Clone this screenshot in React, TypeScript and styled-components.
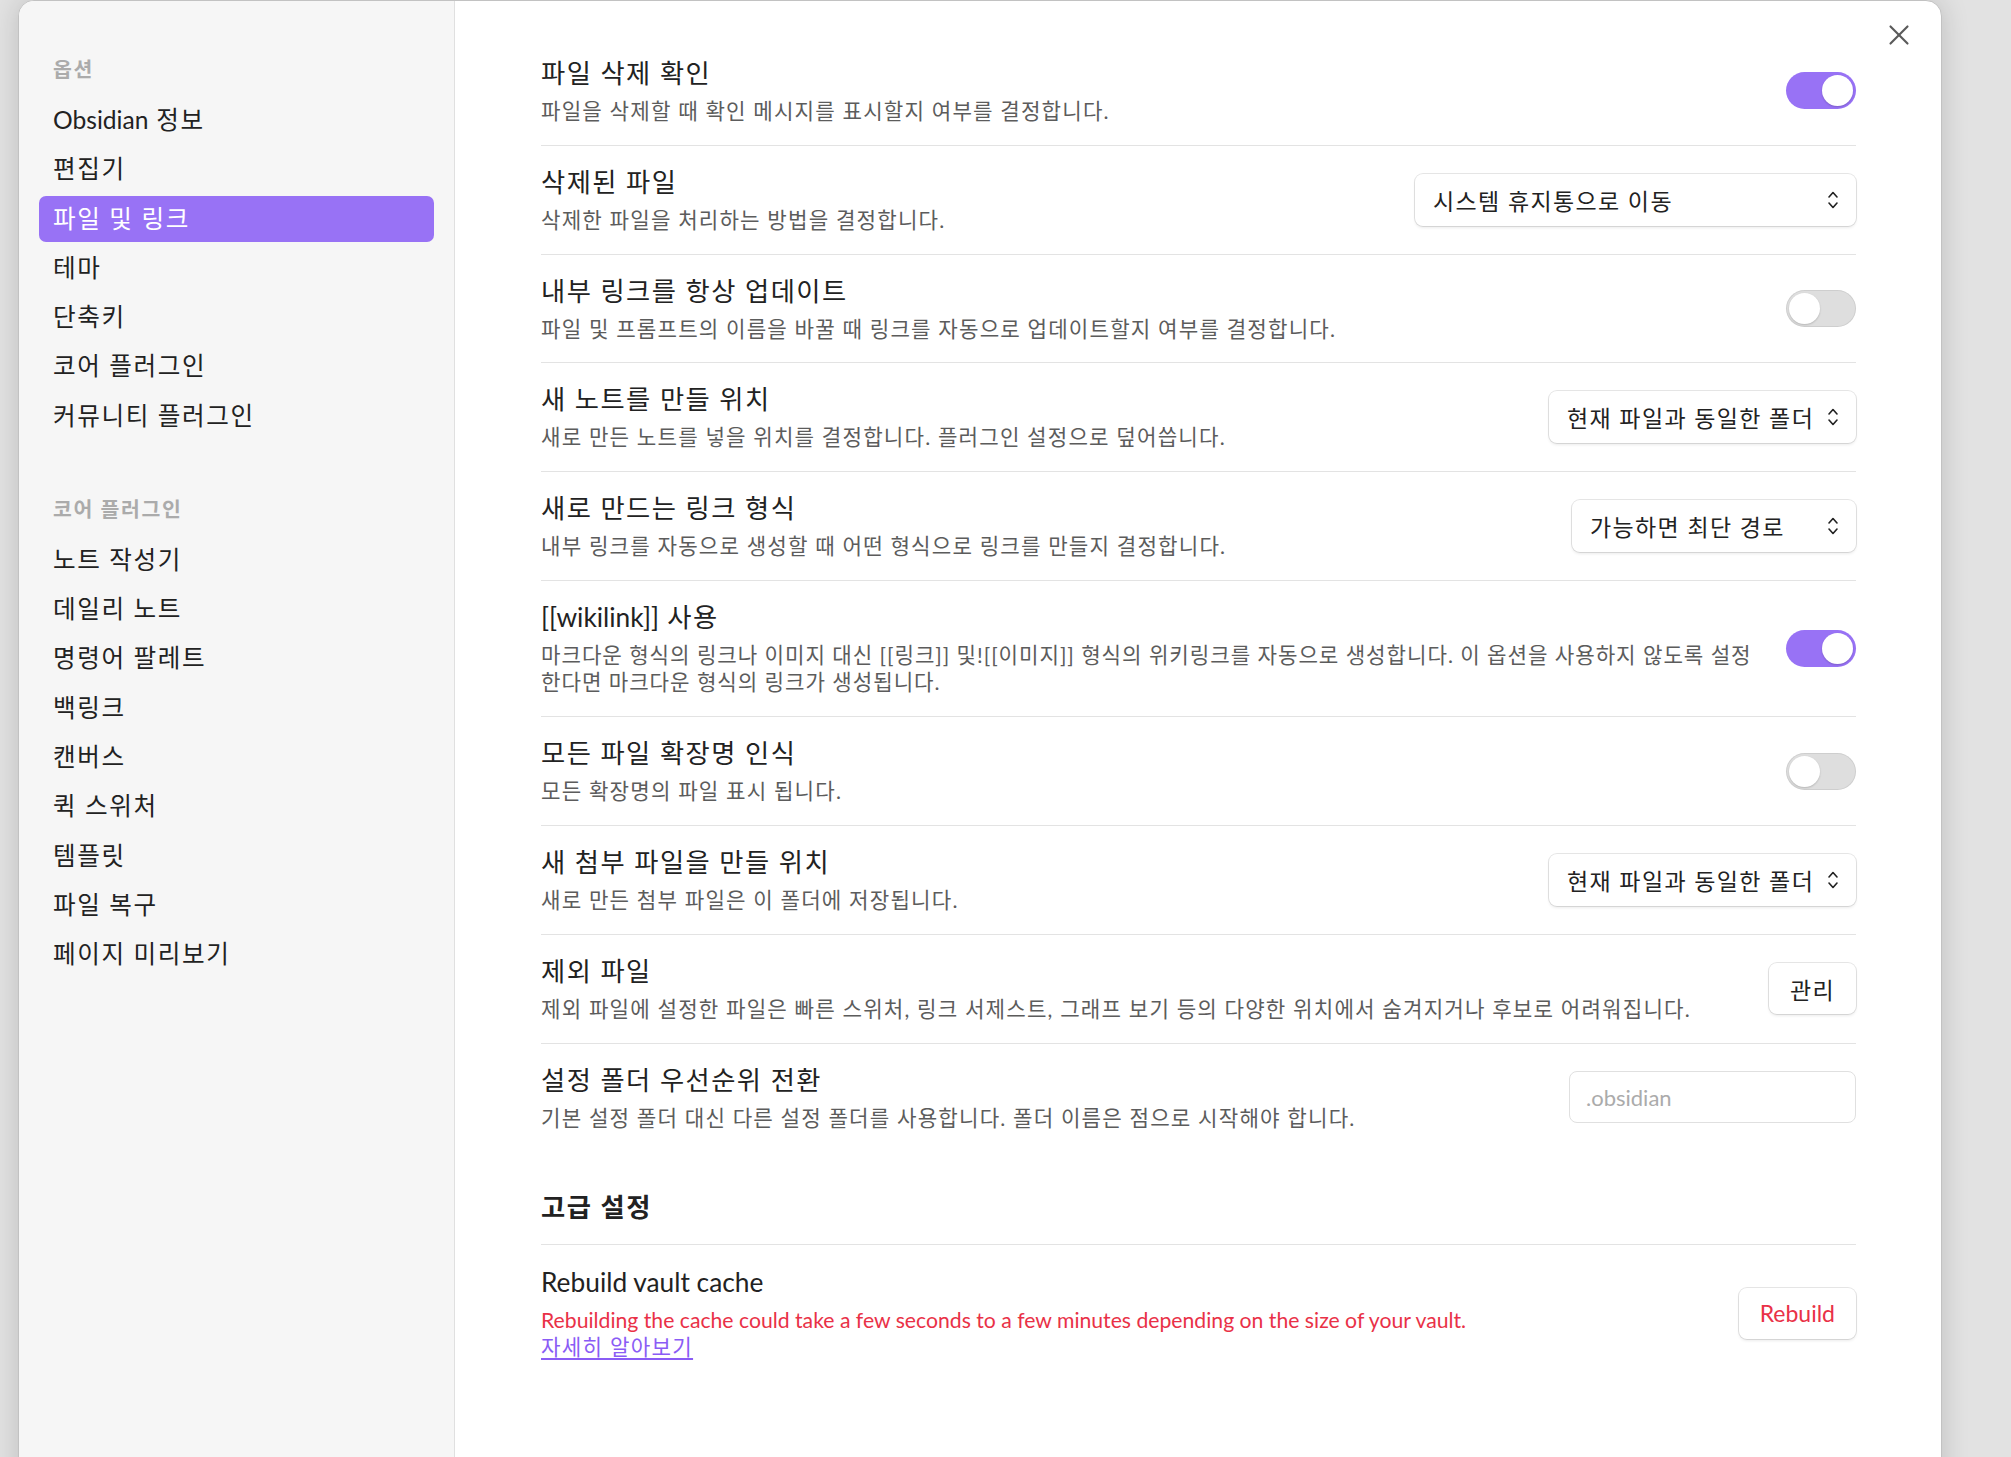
import React from "react";
import styled, { createGlobalStyle } from "styled-components";

const GlobalStyle = createGlobalStyle`
  html, body {
    margin: 0;
    padding: 0;
    background: #e2e2e2;
    overflow: hidden;
  }
  body {
    font-family: Lato, "Noto Sans CJK KR", sans-serif;
    color: #222222;
  }
  * { box-sizing: border-box; }
`;

const Page = styled.div`
  width: 2011px;
  height: 1457px;
  padding-left: 18px;
  display: flex;
  align-items: flex-start;
  overflow: hidden;
  background: #e2e2e2;
`;

const Modal = styled.div`
  position: relative;
  width: 1924px;
  height: 1500px;
  display: flex;
  background: #ffffff;
  border: 1px solid #c2c2c2;
  border-radius: 16px 16px 0 0;
  box-shadow: 0 0 28px rgba(0, 0, 0, 0.16);
  overflow: hidden;
`;

const Sidebar = styled.nav`
  flex: 0 0 436px;
  background: #f6f6f6;
  border-right: 1px solid #e0e0e0;
  padding: 54px 20px 0 20px;
  display: flex;
  flex-direction: column;
  gap: 56px;
`;

const NavGroup = styled.div`
  display: flex;
  flex-direction: column;
  gap: 3.3px;
`;

const NavHeader = styled.div`
  font-size: 20.5px;
  font-weight: 700;
  line-height: 28px;
  letter-spacing: 0.08em;
  color: #ababab;
  padding: 0 14px;
  margin-bottom: 10.7px;
`;

const NavItem = styled.div<{ $active?: boolean }>`
  height: 46px;
  line-height: 34px;
  padding: 6px 14px;
  font-size: 24.6px;
  letter-spacing: 0.065em;
  border-radius: 7px;
  color: ${(p) => (p.$active ? "#ffffff" : "#222222")};
  background: ${(p) => (p.$active ? "#9872f5" : "transparent")};
  white-space: nowrap;
`;

const Latin = styled.span`
  letter-spacing: 0;
`;

const Main = styled.main`
  flex: 1;
  padding: 36px 85px 0 86px;
  display: flex;
  flex-direction: column;
`;

const CloseButton = styled.button`
  position: absolute;
  top: 17px;
  right: 25px;
  width: 34px;
  height: 34px;
  padding: 0;
  border: none;
  background: transparent;
  color: #5a5a5a;
  display: flex;
  align-items: center;
  justify-content: center;
`;

const Row = styled.div<{ $first?: boolean; $plain?: boolean }>`
  display: flex;
  align-items: center;
  gap: 14px;
  padding: 19px 0 19.3px;
  border-top: ${(p) =>
    p.$first ? "none" : p.$plain ? "1px solid transparent" : "1px solid #e3e3e3"};
`;

const Info = styled.div`
  flex: 1;
  min-width: 0;
`;

const Name = styled.div<{ $latin?: boolean }>`
  font-size: 26.3px;
  line-height: 34px;
  letter-spacing: ${(p) => (p.$latin ? "0" : "0.055em")};
  color: #222222;
`;

const Desc = styled.div<{ $error?: boolean; $latin?: boolean; $tight?: boolean }>`
  margin-top: 8px;
  font-size: 21.2px;
  line-height: 27.5px;
  letter-spacing: ${(p) => (p.$latin ? "0" : p.$tight ? "0.045em" : "0.055em")};
  word-break: keep-all;
  color: ${(p) => (p.$error ? "#e93147" : "#5c5c5c")};
`;

const Link = styled.a`
  display: block;
  color: #8a5cf5;
  letter-spacing: 0.06em;
  text-decoration: underline;
  text-underline-offset: 3px;
`;

const Heading = styled.div`
  padding: 38.5px 0 20px;
  border-bottom: 1px solid #e3e3e3;
  font-size: 26.3px;
  line-height: 34px;
  letter-spacing: 0.06em;
  font-weight: 700;
  color: #222222;
`;

const Toggle = styled.div<{ $on?: boolean }>`
  flex: 0 0 70px;
  width: 70px;
  height: 37px;
  padding: 3px;
  border-radius: 19px;
  display: flex;
  align-items: center;
  justify-content: ${(p) => (p.$on ? "flex-end" : "flex-start")};
  background: ${(p) => (p.$on ? "#9872f5" : "#dedede")};
  box-shadow: ${(p) => (p.$on ? "none" : "inset 0 0 0 1px rgba(0,0,0,0.07)")};
`;

const Knob = styled.div`
  width: 31px;
  height: 31px;
  border-radius: 50%;
  background: #ffffff;
  box-shadow: 0 1px 2px rgba(0, 0, 0, 0.18);
`;

const Dropdown = styled.div<{ $w: number }>`
  flex: 0 0 auto;
  width: ${(p) => p.$w}px;
  height: 52px;
  padding: 0 17px 0 18px;
  display: flex;
  align-items: center;
  justify-content: space-between;
  background: #ffffff;
  border-radius: 8px;
  box-shadow: 0 0 0 1px rgba(0, 0, 0, 0.1), 0 2px 3px rgba(0, 0, 0, 0.08);
  font-size: 23px;
  letter-spacing: 0.06em;
  color: #222222;
  white-space: nowrap;
`;

const Button = styled.button<{ $danger?: boolean; $latin?: boolean }>`
  flex: 0 0 auto;
  height: 51px;
  padding: 0 21px;
  border: none;
  border-radius: 8px;
  background: #ffffff;
  box-shadow: 0 0 0 1px rgba(0, 0, 0, 0.1), 0 2px 3px rgba(0, 0, 0, 0.08);
  font-family: inherit;
  font-size: 23px;
  letter-spacing: ${(p) => (p.$latin ? "0" : "0.06em")};
  color: ${(p) => (p.$danger ? "#e93147" : "#222222")};
`;

const TextInput = styled.input`
  flex: 0 0 287px;
  width: 287px;
  height: 52px;
  padding: 0 16px;
  border: 1px solid #e0e0e0;
  border-radius: 8px;
  background: #ffffff;
  font-family: inherit;
  font-size: 22px;
  color: #222222;
  outline: none;
  &::placeholder {
    color: #ababab;
  }
`;

const Chevrons = () => (
  <svg width="12" height="22" viewBox="0 0 12 22" fill="none" stroke="#222" strokeWidth="1.6" strokeLinecap="round" strokeLinejoin="round">
    <path d="M2 8 L6 3.5 L10 8" />
    <path d="M2 14 L6 18.5 L10 14" />
  </svg>
);

const CloseIcon = () => (
  <svg width="34" height="34" viewBox="0 0 24 24" fill="none" stroke="currentColor" strokeWidth="1.5" strokeLinecap="round">
    <path d="M6 6 L18 18" />
    <path d="M18 6 L6 18" />
  </svg>
);

type Control =
  | { kind: "toggle"; on: boolean }
  | { kind: "select"; value: string; width: number }
  | { kind: "button"; label: string; danger?: boolean }
  | { kind: "input"; placeholder: string };

type Setting = { name: React.ReactNode; key: string; desc: string; tight?: boolean; control: Control };

const settings: Setting[] = [
  {
    key: "confirm",
    name: "파일 삭제 확인",
    desc: "파일을 삭제할 때 확인 메시지를 표시할지 여부를 결정합니다.",
    control: { kind: "toggle", on: true },
  },
  {
    key: "trash",
    name: "삭제된 파일",
    desc: "삭제한 파일을 처리하는 방법을 결정합니다.",
    control: { kind: "select", value: "시스템 휴지통으로 이동", width: 441 },
  },
  {
    key: "update",
    name: "내부 링크를 항상 업데이트",
    desc: "파일 및 프롬프트의 이름을 바꿀 때 링크를 자동으로 업데이트할지 여부를 결정합니다.",
    control: { kind: "toggle", on: false },
  },
  {
    key: "newnote",
    name: "새 노트를 만들 위치",
    desc: "새로 만든 노트를 넣을 위치를 결정합니다. 플러그인 설정으로 덮어씁니다.",
    control: { kind: "select", value: "현재 파일과 동일한 폴더", width: 307 },
  },
  {
    key: "linkformat",
    name: "새로 만드는 링크 형식",
    desc: "내부 링크를 자동으로 생성할 때 어떤 형식으로 링크를 만들지 결정합니다.",
    control: { kind: "select", value: "가능하면 최단 경로", width: 284 },
  },
  {
    key: "wikilink",
    name: (
      <>
        <Latin>[[wikilink]]</Latin> 사용
      </>
    ),
    desc: "마크다운 형식의 링크나 이미지 대신 [[링크]] 및![[이미지]] 형식의 위키링크를 자동으로 생성합니다. 이 옵션을 사용하지 않도록 설정 한다면 마크다운 형식의 링크가 생성됩니다.",
    tight: true,
    control: { kind: "toggle", on: true },
  },
  {
    key: "ext",
    name: "모든 파일 확장명 인식",
    desc: "모든 확장명의 파일 표시 됩니다.",
    control: { kind: "toggle", on: false },
  },
  {
    key: "attach",
    name: "새 첨부 파일을 만들 위치",
    desc: "새로 만든 첨부 파일은 이 폴더에 저장됩니다.",
    control: { kind: "select", value: "현재 파일과 동일한 폴더", width: 307 },
  },
  {
    key: "exclude",
    name: "제외 파일",
    desc: "제외 파일에 설정한 파일은 빠른 스위처, 링크 서제스트, 그래프 보기 등의 다양한 위치에서 숨겨지거나 후보로 어려워집니다.",
    control: { kind: "button", label: "관리" },
  },
  {
    key: "configdir",
    name: "설정 폴더 우선순위 전환",
    desc: "기본 설정 폴더 대신 다른 설정 폴더를 사용합니다. 폴더 이름은 점으로 시작해야 합니다.",
    control: { kind: "input", placeholder: ".obsidian" },
  },
];

const renderControl = (c: Control) => {
  switch (c.kind) {
    case "toggle":
      return (
        <Toggle $on={c.on}>
          <Knob />
        </Toggle>
      );
    case "select":
      return (
        <Dropdown $w={c.width}>
          <span>{c.value}</span>
          <Chevrons />
        </Dropdown>
      );
    case "button":
      return <Button $danger={c.danger}>{c.label}</Button>;
    case "input":
      return <TextInput placeholder={c.placeholder} />;
  }
};

const optionItems: { key: string; label: React.ReactNode }[] = [
  { key: "about", label: (<><Latin>Obsidian</Latin> 정보</>) },
  { key: "editor", label: "편집기" },
  { key: "files", label: "파일 및 링크" },
  { key: "theme", label: "테마" },
  { key: "hotkeys", label: "단축키" },
  { key: "core", label: "코어 플러그인" },
  { key: "community", label: "커뮤니티 플러그인" },
];
const pluginItems = ["노트 작성기", "데일리 노트", "명령어 팔레트", "백링크", "캔버스", "퀵 스위처", "템플릿", "파일 복구", "페이지 미리보기"];

export default function App() {
  return (
    <>
      <GlobalStyle />
      <Page>
        <Modal>
          <Sidebar>
            <NavGroup>
              <NavHeader>옵션</NavHeader>
              {optionItems.map((t) => (
                <NavItem key={t.key} $active={t.key === "files"}>
                  {t.label}
                </NavItem>
              ))}
            </NavGroup>
            <NavGroup>
              <NavHeader>코어 플러그인</NavHeader>
              {pluginItems.map((t) => (
                <NavItem key={t}>{t}</NavItem>
              ))}
            </NavGroup>
          </Sidebar>
          <Main>
            {settings.map((s, i) => (
              <Row key={s.key} $first={i === 0}>
                <Info>
                  <Name>{s.name}</Name>
                  <Desc $tight={s.tight}>{s.desc}</Desc>
                </Info>
                {renderControl(s.control)}
              </Row>
            ))}
            <Heading>고급 설정</Heading>
            <Row $plain>
              <Info>
                <Name $latin>Rebuild vault cache</Name>
                <Desc $error $latin>
                  Rebuilding the cache could take a few seconds to a few minutes depending on the size of your vault.
                  <Link href="#">자세히 알아보기</Link>
                </Desc>
              </Info>
              <Button $danger $latin>Rebuild</Button>
            </Row>
          </Main>
          <CloseButton aria-label="닫기">
            <CloseIcon />
          </CloseButton>
        </Modal>
      </Page>
    </>
  );
}
